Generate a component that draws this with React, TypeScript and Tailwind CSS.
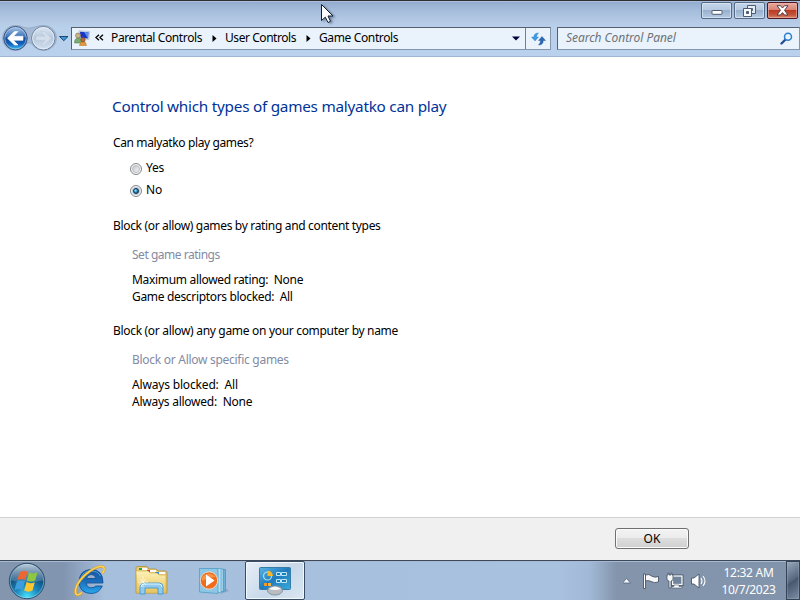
import React from "react";

type BoxProps = { children?: React.ReactNode; className?: string };

function Line({ children, className = "" }: BoxProps) {
  return <div className={"h-[17px] leading-[17px] whitespace-pre " + className}>{children}</div>;
}

function NavButtons() {
  return (
    <svg width="70" height="28" viewBox="0 0 70 28" className="relative -top-px block shrink-0">
      <defs>
        <linearGradient id="back" x1="0" y1="0" x2="0" y2="1">
          <stop offset="0" stopColor="#a9c5e8" />
          <stop offset=".42" stopColor="#4277bd" />
          <stop offset=".5" stopColor="#124a9c" />
          <stop offset=".75" stopColor="#1463be" />
          <stop offset="1" stopColor="#42c8fa" />
        </linearGradient>
        <linearGradient id="fwd" x1="0" y1="0" x2="0" y2="1">
          <stop offset="0" stopColor="#dbe6f2" />
          <stop offset=".5" stopColor="#b8c9dc" />
          <stop offset="1" stopColor="#d3e2f2" />
        </linearGradient>
      </defs>
      <path d="M15 1.500Q20 1 24 3.500Q29 5 35 3Q40 1 44 1.500A12.500 12.500 0 0 1 44 26.500Q36 26 32 20Q29 17 26 20Q21 27 15 26.500A12.500 12.500 0 0 1 15 1.500Z" fill="#a3b9d5" stroke="#98aeca" />
      <circle cx="15.500" cy="14.200" r="11.700" fill="url(#back)" stroke="#3c5277" />
      <circle cx="15.500" cy="14.200" r="10.700" fill="none" stroke="#b8d8f2" strokeOpacity=".55" />
      <path d="M7.500 14.300L14.500 7.500H18L13.500 12.300H23V16.300H13.500L18 21H14.500Z" fill="#fff" stroke="#fff" strokeWidth=".6" />
      <circle cx="43.300" cy="14.200" r="11.700" fill="url(#fwd)" stroke="#6c809c" />
      <circle cx="43.300" cy="14.200" r="10.700" fill="none" stroke="#e9f1f9" strokeOpacity=".8" />
      <path d="M51.300 14.300L44.300 7.500H40.800L45.300 12.300H36V16.300H45.300L40.800 21H44.300Z" fill="#d3dfec" stroke="#bccbdc" strokeWidth=".6" />
      <path d="M59.500 12.500H68L63.800 16.700Z" fill="#3f9ad4" stroke="#123a6c" strokeWidth=".9" />
    </svg>
  );
}

function UsersIcon() {
  return (
    <svg width="16" height="16" viewBox="0 0 16 16" className="relative -top-px block shrink-0">
      <path d="M5 .8L15.500 1.500L15 9.500L5.500 8.500Z" fill="#d7e1ef" stroke="#a9b7c9" strokeWidth=".6" />
      <path d="M6 1.800L14.500 2.300L14 8.500L6.500 7.700Z" fill="#1736c5" />
      <path d="M10 2L14.500 2.300L14 8.500Z" fill="#5b8ff0" />
      <path d="M.5 13Q.5 8 4.200 8T8 13Z" fill="#7aab72" stroke="#4b7b4a" strokeWidth=".5" />
      <circle cx="4" cy="5.500" r="2.500" fill="#c9b486" stroke="#806b45" strokeWidth=".6" />
      <path d="M5.500 15.500Q6 11.500 9 11.500T12.500 15.500Z" fill="#e3993c" stroke="#b46d20" strokeWidth=".5" />
      <circle cx="9" cy="9.800" r="2.200" fill="#b66c39" stroke="#77421d" strokeWidth=".6" />
    </svg>
  );
}

function Chevron() {
  return <svg width="5" height="7" viewBox="0 0 5 7" className="block shrink-0"><path d="M.5 0L4.500 3.500L.5 7Z" fill="#000" /></svg>;
}

function WindowButton({ kind }: { kind: "min" | "restore" | "close" }) {
  const close = kind === "close";
  return (
    <div className={"flex h-[17px] items-center justify-center rounded-[2px] border " + (close
      ? "w-[31px] border-[#4b1720] bg-[linear-gradient(180deg,#e9aa9e_0%,#d98375_45%,#bb3a24_50%,#c4553b_80%,#d98a6e_100%)] shadow-[inset_0_0_0_1px_#e8b6a8a0]"
      : "w-[31px] border-[#566a85] bg-[linear-gradient(180deg,#c5d6ea_0%,#b5c9e1_45%,#98b0cd_50%,#b6cbe4_100%)] shadow-[inset_0_0_0_1px_#dce8f5b0]")}>
      {kind === "min" && <svg width="12" height="7" viewBox="0 0 12 7" className="mt-1"><rect x="1" y="1.500" width="10" height="3.800" rx=".6" fill="#fff" stroke="#4d5b70" /></svg>}
      {kind === "restore" && <svg width="13" height="12" viewBox="0 0 13 12"><path fillRule="evenodd" d="M4.500.5H12.500V8.500H4.500ZM7.500 3.500V5.500H9.500V3.500Z" fill="#e6edf5" stroke="#4d5b70" /><path fillRule="evenodd" d="M.5 3.500H8.500V11.500H.5ZM3.500 6.500V8.500H5.500V6.500Z" fill="#f7fafd" stroke="#4d5b70" /></svg>}
      {close && <svg width="13" height="11" viewBox="0 0 13 11"><path d="M1 .7H4.500L6.500 3L8.500 .7H12L8.500 5.300L12 10H8.500L6.500 7.600L4.500 10H1L4.500 5.300Z" fill="#fff" stroke="#514049" /></svg>}
    </div>
  );
}

function TitleArea() {
  return (
    <header className="h-[57px] border-b border-[#9fb6d2] border-t border-t-[#302d32] bg-[linear-gradient(180deg,#91aacc_0px,#a3bbda_8px,#b5cae5_21px,#b9d0eb_27px,#b9d1ec_55px)] shadow-[inset_0_1px_0_#a9bedb]">
      <div className="flex h-6 justify-end gap-[2px] pt-px pr-[2px]">
        <WindowButton kind="min" /><WindowButton kind="restore" /><WindowButton kind="close" />
      </div>
      <div className="flex h-[27px] items-center">
        <NavButtons />
        <div className="ml-px flex h-[23px] w-[480px] items-center border border-[#8396ad] border-t-[#56616f] border-l-[#56616f] bg-[#eaf2fb] pl-[2px]">
          <UsersIcon />
          <svg width="9" height="8" viewBox="0 0 9 8" className="relative -top-px ml-[5px] shrink-0"><path d="M4 .8L1 3.500L4 6.200M8 .8L5 3.500L8 6.200" fill="none" stroke="#000" strokeWidth="1.300" /></svg>
          <div className="ml-[7px] flex w-[407px] items-center pb-px text-[12px]">
            <span className="w-[101px] whitespace-nowrap tracking-[-0.38px]">Parental Controls</span><Chevron />
            <span className="ml-2 w-[81px] whitespace-nowrap tracking-[-0.44px]">User Controls</span><Chevron />
            <span className="ml-2 whitespace-nowrap tracking-[-0.37px]">Game Controls</span>
          </div>
          <svg width="8" height="5" viewBox="0 0 8 5" className="-ml-[6px] shrink-0"><path d="M0 .5H8L4 4.500Z" fill="#00003c" /></svg>
          <div className="ml-auto flex h-full w-[25px] shrink-0 items-center justify-center border-l border-[#737f8e]">
            <svg width="15" height="14" viewBox="0 0 15 14"><path d="M7.500 1Q3 1 2.800 5H.5L4 9L7.500 5H5.500Q5.500 2.800 7.500 1Z" fill="#3b9ae2" stroke="#2a7fc8" strokeWidth=".4" /><path d="M7.500 13Q12.200 13 12.300 8.500H14.500L11 4.500L7.500 8.500H9.600Q9.600 11.200 7.500 13Z" fill="#2a68b4" stroke="#1b4f9b" strokeWidth=".4" /></svg>
          </div>
        </div>
        <div className="ml-[6px] flex h-[23px] flex-1 items-center border border-[#8396ad] border-t-[#56616f] border-l-[#56616f] bg-[#eaf2fb] pr-[6px] pl-2 text-[12px] text-[#6d7278] italic">
          <span className="flex-1 pb-px tracking-[-0.05px]">Search Control Panel</span>
          <svg width="13" height="13" viewBox="0 0 13 13"><path d="M6 7L1.500 11.500" stroke="#244f95" strokeWidth="2.400" strokeLinecap="round" /><circle cx="8" cy="4.700" r="3.500" fill="#e6f4fe" stroke="#2d7ecd" strokeWidth="1.500" /></svg>
        </div>
      </div>
    </header>
  );
}

function Radio({ checked }: { checked?: boolean }) {
  return (
    <span className="mt-[2px] flex h-3 w-3 items-center justify-center rounded-full border border-[#858788] bg-[#f5f5f5]">
      {checked
        ? <span className="flex h-2 w-2 items-center justify-center rounded-full bg-[#b8cbd9]"><span className="h-[6px] w-[6px] rounded-full border border-[#14304c] bg-[radial-gradient(circle_at_35%_35%,#a7e7fa,#238cc0_50%,#0d4770)]" /></span>
        : <span className="h-2 w-2 rounded-full border border-[#b8bcc1] bg-[linear-gradient(135deg,#c4c8cd,#f4f4f4)]" />}
    </span>
  );
}

function Content() {
  return (
    <main className="h-[460px] bg-white pt-[38px] pl-[113px] text-[12px] text-black">
      <h1 className="-ml-px h-[22px] text-[15.3px] leading-[22px] tracking-[-0.25px] whitespace-nowrap text-[#003399]">Control which types of games malyatko can play</h1>
      <Line className="mt-[17px] tracking-[-0.38px]">Can malyatko play games?</Line>
      <div className="mt-2 ml-[17px] flex h-[17px] items-center gap-1"><Radio /><span className="tracking-[-0.2px]">Yes</span></div>
      <div className="mt-[5px] ml-[17px] flex h-[17px] items-center gap-1"><Radio checked /><span className="tracking-[-0.2px]">No</span></div>
      <Line className="mt-[19px] tracking-[-0.33px]">Block (or allow) games by rating and content types</Line>
      <Line className="mt-3 ml-[19px] tracking-[-0.48px] text-[#838ba4]">Set game ratings</Line>
      <Line className="mt-2 ml-[19px] tracking-[-0.32px]">Maximum allowed rating:  None</Line>
      <Line className="ml-[19px] tracking-[-0.33px]">Game descriptors blocked:  All</Line>
      <Line className="mt-[17px] tracking-[-0.31px]">Block (or allow) any game on your computer by name</Line>
      <Line className="mt-3 ml-[19px] tracking-[-0.28px] text-[#838ba4]">Block or Allow specific games</Line>
      <Line className="mt-2 ml-[19px] tracking-[-0.17px]">Always blocked:  All</Line>
      <Line className="ml-[19px] tracking-[-0.25px]">Always allowed:  None</Line>
    </main>
  );
}

function StartOrb() {
  return (
    <svg width="38" height="38" viewBox="0 0 38 38" className="ml-2 block shrink-0">
      <defs>
        <radialGradient id="orb" cx=".5" cy=".95" r=".95"><stop offset="0" stopColor="#4be1fb" /><stop offset=".35" stopColor="#1b87bd" /><stop offset=".65" stopColor="#12527f" /><stop offset="1" stopColor="#284363" /></radialGradient>
        <linearGradient id="gloss" x1="0" y1="0" x2="0" y2="1"><stop offset="0" stopColor="#d5e3ef" stopOpacity=".85" /><stop offset="1" stopColor="#87a8c5" stopOpacity=".3" /></linearGradient>
      </defs>
      <circle cx="19" cy="19" r="17.700" fill="url(#orb)" stroke="#33516f" />
      <circle cx="19" cy="19" r="16.700" fill="none" stroke="#9dd7ee" strokeOpacity=".55" />
      <path d="M2.500 18.500A16.500 16.500 0 0 1 35.500 18.500Q19 22 2.500 18.500Z" fill="url(#gloss)" />
      <path d="M11.500 10.500Q15.500 7.500 19.500 9.500L17.300 18Q13.500 16 9.300 18.300Z" fill="#ed6530" />
      <path d="M21 10.300Q25 12.500 29.500 10.300L27.200 18.500Q23 20.600 18.900 18.500Z" fill="#8fc73e" />
      <path d="M8.800 19.800Q13 17.500 16.900 19.600L14.600 28Q11 26 6.500 28.200Z" fill="#3d9ddd" />
      <path d="M18.500 20.100Q22.500 22.200 26.800 20.200L24.500 28.600Q20.500 30.800 16.200 28.600Z" fill="#fdc62e" />
    </svg>
  );
}

function IEIcon() {
  return (
    <svg width="34" height="34" viewBox="0 0 34 34">
      <defs><linearGradient id="ie" x1="0" y1="0" x2="0" y2="1"><stop stopColor="#1658a3" /><stop offset=".45" stopColor="#1c69b8" /><stop offset="1" stopColor="#27a9ee" /></linearGradient></defs>
      <path d="M30 19H13.300Q13.800 23.800 18.300 23.800Q21.300 23.800 22.800 22H29.300Q26 29.500 18 29.500Q6.500 29 6 18Q6.500 6 18 5.500Q30 5.500 30 19ZM13.500 14.500H22.800Q22.200 10.500 18.200 10.500T13.500 14.500Z" fill="url(#ie)" stroke="#0c4990" strokeWidth=".8" />
      <path d="M8 14Q10 7 18 6.800Q25 7 27.500 12" fill="none" stroke="#66b3e9" strokeWidth=".8" />
      <path d="M9 28.500Q4 33 2.500 29Q1.500 21 12 11Q23 1.500 29.500 2.500Q33 4 29.500 9.500" fill="none" stroke="#d99e25" strokeWidth="2.500" />
      <path d="M9 28.500Q4 33 2.500 29Q1.500 21 12 11Q23 1.500 29.500 2.500Q33 4 29.500 9.500" fill="none" stroke="#fbd75b" strokeWidth="1.400" />
    </svg>
  );
}

function ExplorerIcon() {
  return (
    <svg width="34" height="34" viewBox="0 0 34 34">
      <defs><linearGradient id="folder" x1="0" y1="0" x2="0" y2="1"><stop stopColor="#fff2b7" /><stop offset="1" stopColor="#e5c35f" /></linearGradient></defs>
      <path d="M2 4Q2 2.500 4 2.500H13L15 5H22L24 7H31Q33 7 33 9V29H2Z" fill="#e8cf80" stroke="#b89847" />
      <path d="M5 4h3v2H5z" fill="#21ae26" /><path d="M8 4h5v2H8z" fill="#fff" /><path d="M13 6h3v2h-3z" fill="#d93a27" /><path d="M16 6h6v2h-6z" fill="#fff" /><path d="M21 8h4v2h-4z" fill="#2592e2" /><path d="M25 8h6v2h-6z" fill="#fff" />
      <path d="M2 7H14L16 9H23L25 11H32V29H3Z" fill="url(#folder)" stroke="#d1af58" strokeWidth=".7" />
      <path d="M6 30V23Q6 19 10 19H25Q29 19 29 23V30H24V24H11V30Z" fill="#91caed" stroke="#3c91c5" strokeWidth=".8" />
      <path d="M7 23Q7 20 10 20H25Q28 20 28 23" fill="none" stroke="#dff6ff" />
      <path d="M9 12V23M4 18H14M6 15L12 21M12 15L6 21" stroke="#fff" strokeWidth=".7" opacity=".8" />
    </svg>
  );
}

function MediaIcon() {
  return (
    <svg width="32" height="28" viewBox="0 0 32 28">
      <path d="M21 23L29 22L31 24L23 27Z" fill="#7895b5" opacity=".5" />
      <path d="M10 2.500H27.500V24L10 25Z" fill="#6faed6" stroke="#4990b8" strokeWidth=".7" />
      <path d="M8 2H25.500V24.500L8 25Z" fill="#9bd1ec" stroke="#4990b8" strokeWidth=".7" />
      <path d="M5 1.500H23V25.500L5 25Z" fill="#b4def1" stroke="#5ba4cb" strokeWidth=".7" />
      <path d="M1.500 1.500H20V26.500L1.500 25Z" fill="#8dc7e6" stroke="#559dc6" strokeWidth=".8" />
      <circle cx="11" cy="13.500" r="8.700" fill="#f06b1b" stroke="#e2dfd3" />
      <path d="M4 10Q11 3 18 10Q12 10 4 14Z" fill="#ffad60" opacity=".6" />
      <path d="M8 7.500L16.500 13.500L8 19.500Z" fill="#fff" />
    </svg>
  );
}

function ControlIcon() {
  return (
    <svg width="34" height="30" viewBox="0 0 34 30">
      <defs><linearGradient id="control" x1="0" y1="0" x2="1" y2="1"><stop stopColor="#5ab5e4" /><stop offset=".5" stopColor="#207bbd" /><stop offset="1" stopColor="#3aabd9" /></linearGradient></defs>
      <rect x="1.500" y="1.500" width="31" height="22" rx="1" fill="url(#control)" stroke="#347da9" />
      <circle cx="9.500" cy="10" r="4" fill="none" stroke="#a4e0f5" strokeWidth="1.200" />
      <path d="M9.500 10V4.500Q14.500 5 15 10Z" fill="#f7b528" />
      <path d="M6 17h3v3H6z" fill="#f19a2a" /><path d="M10 17h3v3h-3z" fill="#efb44a" />
      <g fill="#1681bd" stroke="#c0e7f8"><path d="M18.500 6.500h4v3h-4zM23.500 6.500h5v3h-5zM18.500 13.500h4v3h-4zM23.500 13.500h5v3h-5z" /></g>
      <ellipse cx="17" cy="24.500" rx="7.500" ry="4.500" fill="#b9bdc1" stroke="#85929c" />
      <path d="M11 23Q17 18 23 23Q17 25 11 23Z" fill="#f7f7f7" />
    </svg>
  );
}

function TrayIcons() {
  return (
    <svg width="88" height="20" viewBox="0 0 88 20" className="block">
      <path d="M-.5 12L3.500 7.500L7.500 12Z" fill="#f7fafc" stroke="#53657c" strokeWidth=".8" />
      <path d="M20.500 3H22.500V17.500H20.500Z" fill="#fff" stroke="#46566a" strokeWidth=".9" />
      <path d="M22.500 4Q26.500 2.500 28.500 5Q31.500 7 35.500 5.500V11Q31 12.500 28 10.500Q25.500 9 22.500 10Z" fill="#f7f7f7" stroke="#46566a" strokeWidth=".9" />
      <rect x="49.500" y="5" width="9.500" height="8.500" fill="#7488a0" stroke="#46566a" strokeWidth="3" />
      <rect x="49.500" y="5" width="9.500" height="8.500" fill="#71849b" stroke="#f8f8f8" strokeWidth="1.300" />
      <path d="M51 14H56V15.500H59V17H49V15.500H51Z" fill="#fff" stroke="#46566a" strokeWidth=".6" />
      <path d="M45 2V4H44V8Q44 10 46 10V17H48V10Q50 10 50 8V4H49V2H48V4H46V2Z" fill="#f7f7f7" stroke="#46566a" strokeWidth=".8" />
      <path d="M68.500 7H71L76 3V17L71 13H68.500Z" fill="#fff" stroke="#46566a" strokeWidth=".9" />
      <path d="M78 7Q80 10 78 13M80 5Q84 10 80 15" fill="none" stroke="#fff" strokeWidth="1.100" />
    </svg>
  );
}

function Taskbar() {
  return (
    <footer className="flex h-10 items-center border-t border-[#3d4859] bg-[linear-gradient(90deg,#8495ae_0px,#8295b0_64px,#a6bfdd_105px,#a8c1df_560px,#a1b9d6_590px,#8394ab_617px,#8294ac_800px)] shadow-[inset_0_1px_0_#a6bbd2]">
      <StartOrb />
      <div className="ml-[27px] flex w-[34px] justify-center"><IEIcon /></div>
      <div className="ml-[27px] flex w-[34px] justify-center"><ExplorerIcon /></div>
      <div className="ml-[30px] flex w-8 justify-center"><MediaIcon /></div>
      <div className="ml-[15px] flex h-[39px] w-[60px] items-center justify-center rounded-[2px] border border-[#394c65] bg-[linear-gradient(135deg,#e8eff7,#c7d8e9_55%,#dbe7f3)] shadow-[inset_0_0_0_1px_#f2f8fe]"><ControlIcon /></div>
      <div className="ml-auto flex h-full items-center">
        <TrayIcons />
        <div className="ml-[9px] w-[57px] text-center text-[12px] leading-[17px] whitespace-nowrap text-white"><div className="tracking-[-0.3px]">12:32 AM</div><div className="tracking-[-0.35px]">10/7/2023</div></div>
        <div className="ml-[9px] h-full w-[14px] border border-[#344356] bg-[linear-gradient(145deg,#99a8bb,#576980_48%,#48586d_52%,#7b8da5)] shadow-[inset_0_0_0_1px_#aab6c650]" />
      </div>
    </footer>
  );
}

export default function App() {
  return (
    <div className="relative flex h-[600px] w-[800px] flex-col overflow-hidden bg-[#f0f0f0] font-['Noto_Sans','Open_Sans',sans-serif]">
      <TitleArea />
      <Content />
      <div className="flex h-[43px] justify-end border-t border-[#d0d0d0] bg-[#f0f0f0] pt-[10px] pr-[111px]">
        <button className="flex h-[21px] w-[74px] items-center justify-center rounded-[3px] border border-[#707070] bg-[linear-gradient(180deg,#f3f3f3_0%,#ebebeb_49%,#dddddd_50%,#d0d0d0_100%)] text-[12px] text-black shadow-[inset_0_0_0_1px_#fafafa]">OK</button>
      </div>
      <Taskbar />
      <svg width="17" height="23" viewBox="0 0 17 23" className="absolute top-[3px] left-[320px] drop-shadow-[2px_1px_1px_#2e415a80]"><path d="M1.500 1.500V17.500L5.300 14.200L8 19.500L10.500 18.300L8 13H13Z" fill="#fff" stroke="#111d31" /></svg>
    </div>
  );
}
